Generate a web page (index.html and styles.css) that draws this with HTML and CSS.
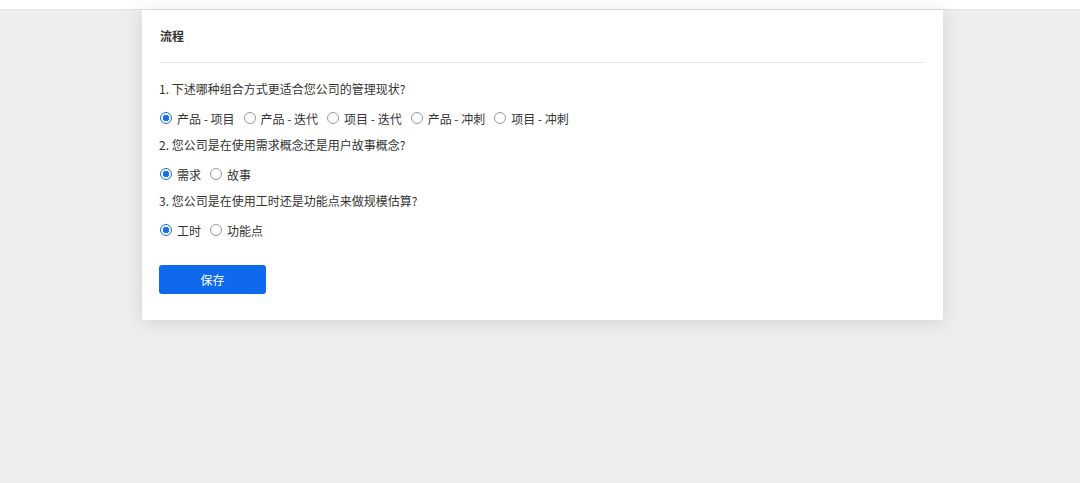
FILE: index.html
```html
<!DOCTYPE html>
<html lang="zh-CN">
<head>
<meta charset="UTF-8">
<meta name="viewport" content="width=device-width, initial-scale=1.0">
<title>流程</title>
<link rel="stylesheet" href="styles.css">
</head>
<body>
  <div class="topbar"></div>

  <div class="card">
    <div class="card-header">流程</div>

    <div class="question">1. 下述哪种组合方式更适合您公司的管理现状?</div>
    <div class="options">
      <label class="option"><input type="radio" name="q1" checked> 产品 - 项目</label>
      <label class="option"><input type="radio" name="q1"> 产品 - 迭代</label>
      <label class="option"><input type="radio" name="q1"> 项目 - 迭代</label>
      <label class="option"><input type="radio" name="q1"> 产品 - 冲刺</label>
      <label class="option"><input type="radio" name="q1"> 项目 - 冲刺</label>
    </div>

    <div class="question">2. 您公司是在使用需求概念还是用户故事概念?</div>
    <div class="options">
      <label class="option"><input type="radio" name="q2" checked> 需求</label>
      <label class="option"><input type="radio" name="q2"> 故事</label>
    </div>

    <div class="question">3. 您公司是在使用工时还是功能点来做规模估算?</div>
    <div class="options">
      <label class="option"><input type="radio" name="q3" checked> 工时</label>
      <label class="option"><input type="radio" name="q3"> 功能点</label>
    </div>

    <button class="save-btn">保存</button>
  </div>
</body>
</html>
```

FILE: styles.css
```css
html, body {
  margin: 0;
  height: 100%;
}
body {
  background-color: #eeeeee;
  font-family: "Noto Sans CJK SC", "Noto Sans", sans-serif;
  font-size: 12px;
  color: #333;
}
.topbar {
  height: 9px;
  background-color: #fff;
  border-bottom: 1px solid #e2e2e2;
}
.card {
  width: 766px;
  margin-left: 142px;
  padding: 0 18px 26px 17px;
  background-color: #fff;
  box-shadow: 0 2px 18px rgba(0, 0, 0, 0.12);
}
.card-header {
  height: 52px;
  line-height: 52px;
  font-weight: bold;
  color: #333;
  border-bottom: 1px solid #e8e8e8;
  margin-left: 1px;
  margin-bottom: 17px;
}
.question {
  line-height: 18px;
  margin-bottom: 11px;
}
.options {
  display: flex;
  align-items: center;
  height: 18px;
  margin-bottom: 9px;
}
.option {
  display: flex;
  align-items: center;
  margin-right: 8px;
  cursor: pointer;
}
.option input {
  appearance: none;
  -webkit-appearance: none;
  width: 12px;
  height: 12px;
  margin: 0 5px 0 1px;
  border: 1px solid #999;
  border-radius: 50%;
  background-color: #fff;
  box-sizing: border-box;
}
.option input:checked {
  border-color: #1a6ff0;
  background: radial-gradient(circle, #1a6ff0 3px, #fff 3.5px);
}
.save-btn {
  display: block;
  margin-top: 26px;
  width: 107px;
  height: 29px;
  border: none;
  border-radius: 3px;
  background-color: #0f69ec;
  color: #fff;
  font-family: inherit;
  font-size: 12px;
  cursor: pointer;
}
```
